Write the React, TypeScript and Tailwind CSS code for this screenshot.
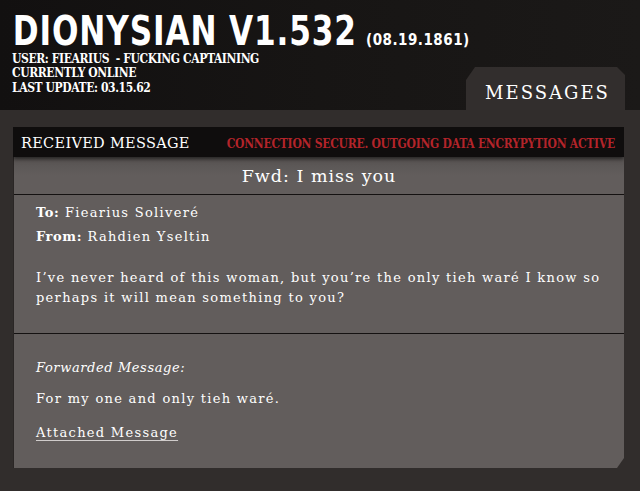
import React from "react";

const slab = '"DejaVu Serif", "Liberation Serif", serif';
const slabC = '"DejaVu Serif Condensed", "DejaVu Serif", serif';
const block = '"DejaVu Sans Condensed", "DejaVu Sans", sans-serif';

export default function App() {
  return (
    <div className="w-[640px] h-[491px] overflow-hidden bg-[#312d2c] text-white">
      <header className="h-[110px] bg-gradient-to-r from-[#121010] via-[#171514] to-[#1b1918] flex justify-between items-end pl-[12px] pr-[15px]">
        <div className="self-start pt-[13px] min-w-0">
          <div className="flex items-baseline whitespace-nowrap">
            <span className="inline-block w-[354px] shrink-0">
              <span
                className="inline-block origin-left [transform:scaleX(0.845)] text-[41px] leading-[36px] font-bold tracking-[1px] pl-[1px]"
                style={{ fontFamily: block, fontStretch: "condensed" }}
              >
                DIONYSIAN V1.532
              </span>
            </span>
            <span className="text-[15px] font-bold tracking-[0.5px]" style={{ fontFamily: block, fontStretch: "condensed" }}>
              (08.19.1861)
            </span>
          </div>
          <div className="text-[12px] leading-[14.5px] font-bold tracking-[-0.4px] whitespace-nowrap" style={{ fontFamily: slabC }}>
            <div>USER: FIEARIUS&nbsp; - FUCKING CAPTAINING</div>
            <div>CURRENTLY ONLINE</div>
            <div>LAST UPDATE: 03.15.62</div>
          </div>
        </div>
        <div
          className="shrink-0 w-[159px] h-[43px] bg-[#322e2d] flex items-center justify-center pt-[7px] [clip-path:polygon(9px_0,151px_0,159px_8px,159px_100%,0_100%,0_13px)]"
          style={{ fontFamily: slab }}
        >
          <span className="text-[18px] tracking-[2px] pl-[4px]">MESSAGES</span>
        </div>
      </header>

      <main className="ml-[13px] mt-[17px] w-[611px] [clip-path:polygon(0_0,100%_0,100%_calc(100%-10px),calc(100%-7px)_100%,0_100%)]">
        <div className="h-[30px] bg-[#0f0d0d] flex items-center justify-between pl-[8px] pr-[9px] pt-[3px] shadow-[0_2px_4px_rgba(0,0,0,0.6)] relative z-10">
          <span className="text-[14.5px] tracking-[0.3px]" style={{ fontFamily: slab }}>
            RECEIVED MESSAGE
          </span>
          <span className="text-[12px] font-bold tracking-[-0.25px] text-[#b3242a]" style={{ fontFamily: slabC }}>
            CONNECTION SECURE. OUTGOING DATA ENCRYPYTION ACTIVE
          </span>
        </div>
        <div className="bg-[#625d5c] border-l border-[#2a2625]" style={{ fontFamily: slab }}>
          <div className="h-[38px] flex items-center justify-center pt-[2px] border-b border-[#141111] text-[17.5px] tracking-[1px] bg-gradient-to-b from-[#575352] via-[#625d5c] to-[#625d5c]">
            Fwd: I miss you
          </div>
          <div className="h-[139px] border-b border-[#141111] pl-[22px] pr-[14px] pt-[6px] text-[13px] tracking-[1.3px]">
            <div className="leading-[24px]">
              <span className="font-bold tracking-[0.6px]">To:</span> Fiearius Soliveré
            </div>
            <div className="leading-[24px]">
              <span className="font-bold tracking-[0.6px]">From:</span> Rahdien Yseltin
            </div>
            <p className="mt-[19px] leading-[20px]">
              I’ve never heard of this woman, but you’re the only tieh waré I know so perhaps it will mean something to you?
            </p>
          </div>
          <div className="h-[134px] pl-[22px] pr-[14px] pt-[22px] text-[13px] tracking-[1.3px]">
            <div className="italic leading-[24px] tracking-[0.6px]">Forwarded Message:</div>
            <div className="leading-[24px] mt-[7px]">For my one and only tieh waré.</div>
            <div className="leading-[24px] mt-[10px]">
              <span className="underline underline-offset-[3px] decoration-[#d0cccb]">Attached Message</span>
            </div>
          </div>
        </div>
      </main>
    </div>
  );
}
